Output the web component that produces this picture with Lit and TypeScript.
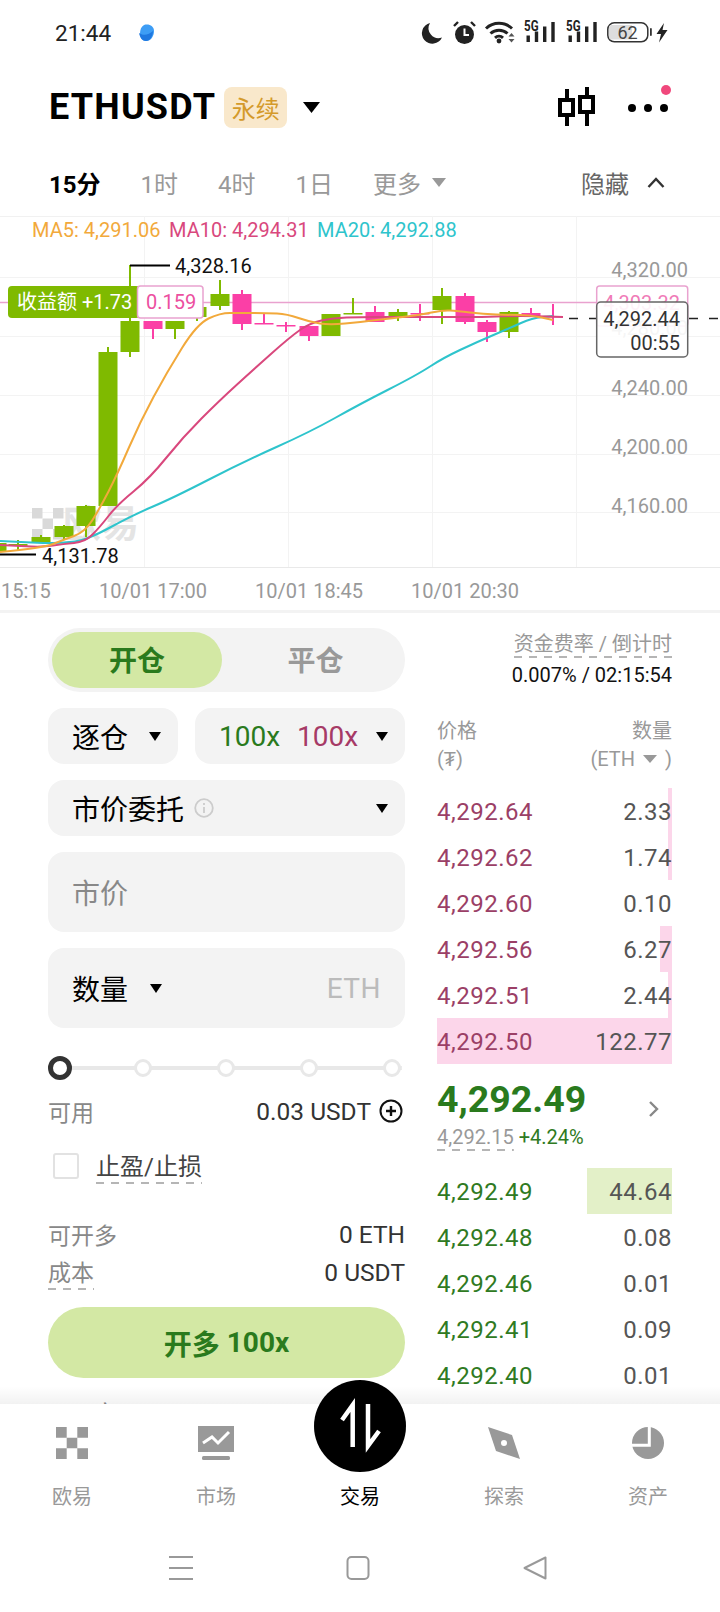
import { LitElement, html, css, svg } from "lit";
import { customElement } from "lit/decorators.js";

const GREEN = "#7fba00";
const PINK = "#fb3fa6";

// candles in page pixels: x, body top, body bottom, wick top, wick bottom, up?
const candles: [number, number, number, number, number, boolean][] = [
  [-3, 543, 552, 543, 552, true],
  [18, 544, 546, 540, 550, true],
  [41, 537, 543, 535, 543, true],
  [64, 526, 537, 525, 540, true],
  [86, 506, 526, 505, 537, true],
  [108, 352, 506, 347, 506, true],
  [130, 321, 352, 265, 357, true],
  [153, 321, 329, 321, 339, false],
  [175, 321, 329, 321, 339, true],
  [197, 307, 317, 307, 321, true],
  [220, 294, 306, 280, 310, true],
  [242, 294, 324, 290, 330, false],
  [264, 323, 324, 313, 324, false],
  [286, 325, 326, 322, 332, false],
  [309, 326, 336, 326, 341, false],
  [331, 314, 336, 314, 336, true],
  [353, 313, 314, 298, 314, true],
  [375, 312, 322, 306, 322, false],
  [398, 312, 317, 309, 321, true],
  [420, 313, 314, 304, 321, false],
  [442, 296, 310, 288, 324, true],
  [465, 296, 322, 293, 324, false],
  [487, 322, 332, 320, 342, false],
  [509, 312, 332, 311, 338, true],
  [531, 313, 317, 308, 317, false],
  [553, 316, 317, 304, 325, false],
];

const ma5 = "0,552 43,548 63,540 85,532 100,508 117,475 140,422 167,372 197,324 220,313 240,313 267,313 287,314 310,322 330,325 360,322 393,318 420,315 443,310 457,311 483,314 510,315 530,315 553,320";
const ma10 = "0,545 20,546 43,547 63,544 85,542 100,527 117,505 150,478 183,437 220,400 253,370 290,337 310,323 333,318 360,317 393,317 443,317 483,317 510,316 533,316 563,317";
const ma20 = "0,541 20,542 43,543 63,543 87,540 133,515 173,498 243,462 310,432 360,404 417,375 443,358 477,342 510,328 532,318 553,316";

// rounds the corners of a polyline, the chart lines are curves
const smooth = (pts: string) => {
  const p = pts.split(" ").map((s) => s.split(",").map(Number));
  let d = `M${p[0]}`;
  for (let i = 1; i < p.length - 1; i++) {
    d += `Q${p[i]} ${(p[i][0] + p[i + 1][0]) / 2},${(p[i][1] + p[i + 1][1]) / 2}`;
  }
  return d + `L${p[p.length - 1]}`;
};

const yLabels: [string, number][] = [
  ["4,320.00", 277],
  ["4,240.00", 395],
  ["4,200.00", 454],
  ["4,160.00", 513],
];

const xLabels: [string, number][] = [
  ["15:15", 1],
  ["10/01 17:00", 99],
  ["10/01 18:45", 255],
  ["10/01 20:30", 411],
];

const asks: [string, string, number][] = [
  ["4,292.64", "2.33", 4],
  ["4,292.62", "1.74", 4],
  ["4,292.60", "0.10", 0],
  ["4,292.56", "6.27", 12],
  ["4,292.51", "2.44", 4],
  ["4,292.50", "122.77", 235],
];

const bids: [string, string, number][] = [
  ["4,292.49", "44.64", 85],
  ["4,292.48", "0.08", 0],
  ["4,292.46", "0.01", 0],
  ["4,292.41", "0.09", 0],
  ["4,292.40", "0.01", 0],
];

const caret = html`<svg class="caret" viewBox="0 0 12 9"><path d="M0 0h12L6 9z" fill="#000" /></svg>`;

const signal = (dx: number) => svg`
  <text x=${114 + dx} y="21" font-family="Roboto" font-weight="700" font-size="14.5" textLength="14.5" lengthAdjust="spacingAndGlyphs" fill="#222">5G</text>
  <path d=${`M${116.5 + dx} 32v-6.5h3.4v6.5zM${124.8 + dx} 32v-10.5h3.4v10.5zM${133 + dx} 32v-15.5h3.4v15.5zM${141.3 + dx} 32v-20h3.4v20z`} fill="#222" />`;

@customElement("app-root")
export class AppRoot extends LitElement {
  static styles = css`
    :host {
      display: block;
      width: 720px;
      height: 1612px;
      background: #fff;
      color: #000;
      font-family: Roboto, "Noto Sans CJK SC", sans-serif;
    }
    .page {
      display: flex;
      flex-direction: column;
      height: 1612px;
      overflow: hidden;
    }
    svg {
      display: block;
      flex: none;
    }

    .status {
      height: 64px;
      flex: none;
      display: flex;
      align-items: center;
      justify-content: space-between;
      padding: 0 48px 0 55px;
      box-sizing: border-box;
    }
    .status-left {
      display: flex;
      align-items: center;
      gap: 26px;
      font-size: 22.5px;
      color: #222;
      padding-top: 2px;
    }
    .status-icons {
      margin-top: 6px;
    }

    .header {
      height: 86px;
      flex: none;
      display: flex;
      align-items: center;
      padding: 0 48px 0 49px;
      box-sizing: border-box;
    }
    .symbol {
      font-size: 36px;
      font-weight: 700;
      letter-spacing: 1.2px;
    }
    .badge {
      margin-left: 8px;
      width: 63px;
      height: 41px;
      border-radius: 8px;
      background: #f9e8cb;
      color: #d49a2a;
      font-size: 24px;
      display: flex;
      align-items: center;
      justify-content: center;
    }
    .header .caret {
      width: 17px;
      height: 11px;
      margin-left: 16px;
    }
    .header-right {
      margin-left: auto;
      display: flex;
      align-items: center;
      gap: 32px;
    }

    .tabs {
      height: 66px;
      flex: none;
      display: flex;
      align-items: center;
      gap: 40px;
      padding: 0 55px 2px 49px;
      box-sizing: border-box;
      font-size: 24px;
      color: #999;
    }
    .tabs .on {
      color: #000;
      font-weight: 700;
    }
    .more {
      display: flex;
      align-items: center;
      gap: 11px;
    }
    .more svg {
      width: 14px;
      height: 9px;
    }
    .hide {
      margin-left: auto;
      display: flex;
      align-items: center;
      gap: 18px;
      color: #666;
    }

    .chart {
      flex: none;
      width: 720px;
      height: 396px;
    }
    .chart text {
      font-family: Roboto, sans-serif;
      font-size: 20px;
    }
    .chart .cjk {
      font-family: Roboto, "Noto Sans CJK SC", sans-serif;
    }
    .chart .mark {
      font-size: 38px;
      font-weight: 700;
    }

    .main {
      flex: 1;
      min-height: 0;
      overflow: hidden;
      border-top: 3px solid #f3f3f3;
      margin-top: -2px;
      display: grid;
      grid-template-columns: 357px 235px;
      column-gap: 32px;
      padding-left: 48px;
    }

    .form {
      display: flex;
      flex-direction: column;
      padding-top: 15px;
    }
    .toggle {
      height: 64px;
      flex: none;
      border-radius: 32px;
      background: #f3f3f3;
      padding: 4px;
      box-sizing: border-box;
      display: grid;
      grid-template-columns: 170px 1fr;
      grid-template-rows: 56px;
      font-size: 28px;
      font-weight: 700;
      color: #999;
      text-align: center;
      line-height: 60px;
    }
    .toggle .on {
      background: #d3e8a4;
      border-radius: 28px;
      color: #2a7a1d;
    }
    .toggle .off {
      padding-left: 8px;
    }
    .pair {
      display: grid;
      grid-template-columns: 130px 1fr;
      gap: 17px;
      margin-top: 16px;
    }
    .box {
      background: #f3f3f3;
      border-radius: 16px;
      height: 56px;
      flex: none;
      display: flex;
      align-items: center;
      padding: 0 17px 0 24px;
      font-size: 28px;
    }
    .box .caret {
      width: 12px;
      height: 9px;
      margin-left: auto;
    }
    .stack {
      margin-top: 16px;
    }
    .tall {
      height: 80px;
    }
    .lev-long {
      color: #2a7a1d;
    }
    .lev-short {
      color: #a63a66;
      margin-left: 17px;
    }
    .box .info {
      margin-left: 10px;
    }
    .hint {
      color: #888;
    }
    .unit {
      margin-left: auto;
      margin-right: 7px;
      color: #bbb;
      letter-spacing: 0.5px;
    }
    .box .qty-caret {
      margin-left: 22px;
    }

    .slider {
      height: 24px;
      flex: none;
      margin-top: 28px;
      display: flex;
      align-items: center;
      justify-content: space-between;
      padding: 0 4px 0 3px;
      background: linear-gradient(#e8e8e8, #e8e8e8) center / 98% 4px no-repeat;
    }
    .knob {
      width: 18px;
      height: 18px;
      border-radius: 50%;
      border: 3px solid #e8e8e8;
      background: #fff;
      box-sizing: border-box;
    }
    .knob.on {
      width: 24px;
      height: 24px;
      margin: 0 -3px;
      border: 5px solid #333;
    }

    .line {
      height: 30px;
      flex: none;
      display: flex;
      align-items: center;
      justify-content: space-between;
      font-size: 23px;
      color: #888;
    }
    .line .val {
      color: #333;
      font-size: 24.5px;
    }
    .avail {
      margin-top: 16px;
    }
    .avail .val {
      display: flex;
      align-items: center;
      gap: 8px;
      margin-right: 2px;
    }
    .tpsl {
      display: flex;
      align-items: center;
      gap: 17px;
      margin: 21px 0 0 5px;
      font-size: 24px;
      color: #444;
    }
    .check {
      width: 26px;
      height: 26px;
      border: 2px solid #e2e2e2;
      border-radius: 3px;
      box-sizing: border-box;
    }
    .dashed {
      padding-bottom: 2px;
      background: repeating-linear-gradient(90deg, #b5b5b5 0 8px, transparent 8px 15px) bottom / 100% 2px no-repeat;
    }
    .can-open {
      margin-top: 35px;
    }
    .cost {
      margin-top: 8px;
    }
    .submit {
      margin-top: 20px;
      height: 71px;
      flex: none;
      border-radius: 36px;
      background: #d3e8a4;
      color: #2a7a1d;
      font-size: 28px;
      font-weight: 700;
      display: flex;
      align-items: center;
      justify-content: center;
      gap: 7px;
    }
    .after {
      margin-top: 19px;
    }

    .book {
      display: flex;
      flex-direction: column;
    }
    .funding {
      padding-top: 19px;
      display: flex;
      flex-direction: column;
      align-items: flex-end;
      font-size: 20px;
      color: #999;
      line-height: 24px;
    }
    .funding b {
      font-weight: 400;
      color: #111;
      margin-top: 5px;
    }
    .book-head {
      margin-top: 30px;
      display: flex;
      justify-content: space-between;
      font-size: 20px;
      line-height: 28px;
      color: #999;
    }
    .book-head .r {
      text-align: right;
    }
    .unit-line {
      display: flex;
      align-items: center;
      gap: 8px;
    }
    .unit-line svg {
      width: 14px;
      height: 8px;
    }
    .rows {
      margin-top: 15px;
    }
    .row {
      height: 46px;
      box-sizing: border-box;
      padding-top: 2px;
      display: flex;
      align-items: center;
      justify-content: space-between;
      font-size: 24px;
      letter-spacing: 0.5px;
      color: #555;
      background-repeat: no-repeat;
      background-position: right;
    }
    .ask {
      background-image: linear-gradient(#fcd6ea, #fcd6ea);
    }
    .bid {
      background-image: linear-gradient(#e3f0c8, #e3f0c8);
    }
    .ask span:first-child {
      color: #9b3f66;
    }
    .bid span:first-child {
      color: #2f7a22;
    }
    .mid {
      display: flex;
      justify-content: space-between;
      height: 104px;
      padding: 13px 12px 0 0;
      box-sizing: border-box;
    }
    .mid svg {
      margin-top: 23px;
    }
    .mid-price {
      font-size: 37.5px;
      font-weight: 700;
      color: #2a7a1d;
      line-height: 44px;
    }
    .mid-sub {
      display: flex;
      gap: 5px;
      font-size: 20px;
      line-height: 24px;
      margin-top: 4px;
      color: #999;
    }
    .mid-sub b {
      font-weight: 400;
      color: #2f7a22;
    }

    .nav {
      position: relative;
      flex: none;
      height: 208px;
      background: #fff;
      display: flex;
      flex-direction: column;
    }
    .nav::before {
      content: "";
      position: absolute;
      left: 0;
      right: 0;
      top: -18px;
      height: 18px;
      background: linear-gradient(rgba(0, 0, 0, 0), rgba(0, 0, 0, 0.05));
    }
    .fab {
      position: absolute;
      left: 314px;
      top: -24px;
      width: 92px;
      height: 92px;
      border-radius: 50%;
      background: #000;
    }
    .items {
      display: grid;
      grid-template-columns: repeat(5, 144px);
      padding-top: 19px;
    }
    .item {
      display: flex;
      flex-direction: column;
      align-items: center;
      gap: 20px;
      font-size: 20px;
      line-height: 28px;
      color: #999;
    }
    .item.on {
      color: #000;
    }
    .icon {
      width: 40px;
      height: 40px;
    }
    .soft {
      margin-top: 45px;
      display: flex;
      justify-content: center;
      gap: 153px;
      padding-right: 4px;
    }
  `;

  private statusIcons() {
    return html`<svg class="status-icons" width="262" height="50" viewBox="0 0 262 50">
      <path d="M20 13a10.5 10.5 0 1 0 12 14.5a10 10 0 0 1-12-14.5z" fill="#222" />
      <circle cx="54.5" cy="24.5" r="9.5" fill="#222" />
      <path d="M54.5 18.5v6.5h4.5" fill="none" stroke="#fff" stroke-width="2" />
      <path d="M44 16l4-4M65 16l-4-4" stroke="#222" stroke-width="2.4" />
      <g fill="none" stroke="#222" stroke-width="3">
        <path d="M76 18.5a19 19 0 0 1 26 0" />
        <path d="M80.5 23.5a12.5 12.5 0 0 1 17 0" />
        <path d="M85 27.8a6 6 0 0 1 8 0" />
      </g>
      <circle cx="89" cy="31" r="2.4" fill="#222" />
      <path d="M98.5 26.5l3-3.5l3 3.5zM98.5 29l3 3.5l3-3.5z" fill="#555" />
      ${signal(0)}${signal(42)}
      <rect x="197.8" y="12.8" width="40" height="19" rx="6.5" fill="#fff" stroke="#333" stroke-width="1.5" />
      <path d="M201 15h21v14.6h-21a2.4 2.4 0 0 1-2-2.4v-9.8a2.4 2.4 0 0 1 2-2.4z" fill="#ddd" />
      <text x="217.5" y="28.5" text-anchor="middle" font-family="Roboto" font-size="18" fill="#444">62</text>
      <rect x="240" y="18" width="1.8" height="8" rx="0.9" fill="#333" />
      <path d="M254 13l-7.5 11h4.5l-2 8.5l8.5-12.5h-5z" fill="#222" />
    </svg>`;
  }

  private chart() {
    return html`<svg class="chart" viewBox="0 216 720 396">
      <path d="M0 216.5H720" stroke="#f1f1f1" />
      ${[277, 336, 395, 454, 512].map((y) => svg`<path d=${`M0 ${y}.5H720`} stroke="#f3f3f3" />`)}
      ${[144, 288, 432, 576].map((x) => svg`<path d=${`M${x}.5 216V567`} stroke="#f3f3f3" />`)}
      <path d="M0 567.5H720" stroke="#e9e9e9" />

      <g transform="translate(32 508)" fill="#d9d9d9">
        ${[[0, 0], [21, 0], [10.5, 10.5], [0, 21], [21, 21]].map(([x, y]) => svg`<rect x=${x} y=${y} width="10.5" height="10.5" />`)}
      </g>
      <text class="cjk mark" x="63" y="537" fill="#e4e4e4">欧易</text>

      ${yLabels.map(([t, y]) => svg`<text x="688" y=${y} text-anchor="end" fill="#999">${t}</text>`)}
      ${xLabels.map(([t, x]) => svg`<text x=${x} y="598" fill="#999">${t}</text>`)}

      <path d="M0 302.5H600" stroke="#e9a2cf" stroke-width="1.5" />
      ${candles.map(([x, t, b, wt, wb, up]) => {
        const c = up ? GREEN : PINK;
        return svg`<path d=${`M${x} ${wt}V${wb}`} stroke=${c} stroke-width="2" />
          <rect x=${x - 9.5} y=${t} width="19" height=${Math.max(b - t, 1.5)} fill=${c} />`;
      })}

      <path d=${smooth(ma20)} fill="none" stroke="#2ec4cc" stroke-width="2" />
      <path d=${smooth(ma10)} fill="none" stroke="#d9487d" stroke-width="2" />
      <path d=${smooth(ma5)} fill="none" stroke="#f2a93b" stroke-width="2" />

      <path d="M130 265.5H170" stroke="#000" stroke-width="2" />
      <text x="175" y="273" fill="#111">4,328.16</text>
      <path d="M0 554.5H36" stroke="#000" stroke-width="2" />
      <text x="42" y="563" fill="#111">4,131.78</text>

      <text x="32" y="237" fill="#f2a93b">MA5: 4,291.06</text>
      <text x="169" y="237" fill="#d9487d">MA10: 4,294.31</text>
      <text x="317" y="237" fill="#2ec4cc">MA20: 4,292.88</text>

      <rect x="8" y="286" width="132" height="32" rx="4" fill=${GREEN} />
      <text class="cjk" x="17" y="309" fill="#fff">收益额 +1.73</text>
      <rect x="137.5" y="286" width="65.5" height="32" rx="3" fill="#fff" stroke="#e9a2cf" stroke-width="1.5" />
      <text x="146" y="309" fill="#ec4f9f">0.159</text>

      <path d="M569 318.5H720" stroke="#222" stroke-width="1.5" stroke-dasharray="9 11" />
      <rect x="596.7" y="286" width="91" height="40" rx="3" fill="#fff" stroke="#e9a2cf" stroke-width="1.5" />
      <text x="680" y="310" text-anchor="end" fill="#ec4f9f" opacity="0.75">4,303.32</text>
      <text x="688" y="335" text-anchor="end" fill="#999">4,280.00</text>
      <rect x="596.7" y="302" width="91" height="55" rx="4" fill="#fff" fill-opacity="0.9" stroke="#666" stroke-width="1.5" />
      <text x="680" y="326" text-anchor="end" fill="#333">4,292.44</text>
      <text x="680" y="350" text-anchor="end" fill="#333">00:55</text>
    </svg>`;
  }

  private row(kind: string, [price, qty, depth]: [string, string, number]) {
    return html`<div class="row ${kind}" style="background-size:${depth}px 100%">
      <span>${price}</span><span>${qty}</span>
    </div>`;
  }

  render() {
    return html`<div class="page">
      <div class="status">
        <div class="status-left">
          <span>21:44</span>
          <svg width="18" height="18" viewBox="0 0 18 18">
            <path d="M7 1c5-1.5 10 1 10 6c0 5-3 10-8 10c-2 0-4-1-5-3c-2-4-1-11 3-13z" fill="#3d9df5" />
            <path d="M2 9c4 3 10 2 14-2c0 5-3 10-7 10c-3.5 0-6-3-7-8z" fill="#1f78e0" />
          </svg>
        </div>
        ${this.statusIcons()}
      </div>

      <div class="header">
        <span class="symbol">ETHUSDT</span>
        <span class="badge">永续</span>
        <svg class="caret" viewBox="0 0 17 11"><path d="M0 0h17L8.5 11z" fill="#000" /></svg>
        <div class="header-right">
          <svg width="39" height="40" viewBox="0 0 39 40" fill="none" stroke="#000" stroke-width="4">
            <path d="M10 2v11M10 28v11M30 0v10M30 25v14" />
            <rect x="3" y="13" width="13" height="15" />
            <rect x="23" y="10" width="13" height="15" />
          </svg>
          <svg width="44" height="44" viewBox="0 0 44 44">
            <circle cx="4" cy="23" r="4" /><circle cx="20" cy="23" r="4" /><circle cx="36" cy="23" r="4" />
            <circle cx="38" cy="5" r="5" fill="#f0487c" />
          </svg>
        </div>
      </div>

      <div class="tabs">
        <span class="on">15分</span><span>1时</span><span>4时</span><span>1日</span>
        <span class="more">更多<svg viewBox="0 0 14 9"><path d="M0 0h14L7 9z" fill="#999" /></svg></span>
        <span class="hide">隐藏
          <svg width="18" height="11" viewBox="0 0 18 11"><path d="M1.5 10L9 2l7.5 8" fill="none" stroke="#333" stroke-width="2.4" /></svg>
        </span>
      </div>

      ${this.chart()}

      <div class="main">
        <div class="form">
          <div class="toggle"><span class="on">开仓</span><span class="off">平仓</span></div>
          <div class="pair">
            <div class="box">逐仓 ${caret}</div>
            <div class="box"><span class="lev-long">100x</span><span class="lev-short">100x</span>${caret}</div>
          </div>
          <div class="box stack">
            市价委托
            <svg class="info" width="20" height="20" viewBox="0 0 20 20" fill="none" stroke="#ccc" stroke-width="1.8">
              <circle cx="10" cy="10" r="8.8" /><path d="M10 9v6M10 5v2" />
            </svg>
            ${caret}
          </div>
          <div class="box stack tall hint">市价</div>
          <div class="box stack tall">
            数量 <svg class="caret qty-caret" viewBox="0 0 12 9"><path d="M0 0h12L6 9z" fill="#000" /></svg>
            <span class="unit">ETH</span>
          </div>
          <div class="slider">
            <span class="knob on"></span><span class="knob"></span><span class="knob"></span><span class="knob"></span><span class="knob"></span>
          </div>
          <div class="line avail">
            <span>可用</span>
            <span class="val">0.03 USDT
              <svg width="24" height="24" viewBox="0 0 24 24" fill="none" stroke="#111" stroke-width="2">
                <circle cx="12" cy="12" r="10.5" /><path d="M12 7v10M7 12h10" stroke-width="2.4" />
              </svg>
            </span>
          </div>
          <div class="tpsl"><span class="check"></span><span class="dashed">止盈/止损</span></div>
          <div class="line can-open"><span>可开多</span><span class="val">0 ETH</span></div>
          <div class="line cost"><span class="dashed">成本</span><span class="val">0 USDT</span></div>
          <div class="submit"><span>开多</span><span>100x</span></div>
          <div class="line after"><span>可开空</span><span class="val">0 ETH</span></div>
        </div>

        <div class="book">
          <div class="funding">
            <span class="dashed">资金费率 / 倒计时</span>
            <b>0.007% / 02:15:54</b>
          </div>
          <div class="book-head">
            <div>价格<br />(₮)</div>
            <div class="r">数量<br />
              <span class="unit-line">(ETH <svg viewBox="0 0 14 8"><path d="M0 0h14L7 8z" fill="#999" /></svg>)</span>
            </div>
          </div>
          <div class="rows">${asks.map((a) => this.row("ask", a))}</div>
          <div class="mid">
            <div>
              <div class="mid-price">4,292.49</div>
              <div class="mid-sub"><span class="dashed">4,292.15</span><b>+4.24%</b></div>
            </div>
            <svg width="12" height="18" viewBox="0 0 12 18"><path d="M2 2l7 7l-7 7" fill="none" stroke="#888" stroke-width="2.4" /></svg>
          </div>
          <div>${bids.map((b) => this.row("bid", b))}</div>
        </div>
      </div>

      <div class="nav">
        <svg class="fab" viewBox="314 1380 92 92" fill="none" stroke="#fff" stroke-width="4.5">
          <path d="M352.7 1447V1405L342 1420M368 1404V1446L379 1431" />
        </svg>
        <div class="items">
          <div class="item">
            <svg class="icon" viewBox="0 0 40 40" fill="#999">
              <path d="M4 4h10.7v10.7H4zM25.3 4H36v10.7H25.3zM14.7 14.7h10.6v10.6H14.7zM4 25.3h10.7V36H4zM25.3 25.3H36V36H25.3z" />
            </svg>
            <span>欧易</span>
          </div>
          <div class="item">
            <svg class="icon" viewBox="0 0 40 40" fill="#999">
              <path d="M2 3h36v26H2z" /><rect x="6" y="33" width="28" height="4" rx="1.5" />
              <path d="M7 20l9-6l6 6l11-11" fill="none" stroke="#fff" stroke-width="3" />
            </svg>
            <span>市场</span>
          </div>
          <div class="item on">
            <div class="icon"></div>
            <span>交易</span>
          </div>
          <div class="item">
            <svg class="icon" viewBox="0 0 40 40" fill="#999">
              <path fill-rule="evenodd" d="M4 4l24 8l8 24l-24-8zM20 17a3 3 0 1 0 0 6a3 3 0 0 0 0-6z" />
            </svg>
            <span>探索</span>
          </div>
          <div class="item">
            <svg class="icon" viewBox="0 0 40 40" fill="#999">
              <circle cx="20" cy="20" r="16" />
              <path d="M21.3 3v19.3H3" fill="none" stroke="#fff" stroke-width="3" />
            </svg>
            <span>资产</span>
          </div>
        </div>
        <div class="soft">
          <svg width="24" height="24" viewBox="0 0 24 24" stroke="#999" stroke-width="2">
            <path d="M0 1h24M0 12h24M0 23h24" />
          </svg>
          <svg width="24" height="24" viewBox="0 0 24 24" fill="none" stroke="#999" stroke-width="2">
            <rect x="1.5" y="1" width="21" height="22" rx="4" />
          </svg>
          <svg width="24" height="24" viewBox="0 0 24 24" fill="none" stroke="#999" stroke-width="2">
            <path d="M22.5 1.5v21L1.5 12z" stroke-linejoin="round" />
          </svg>
        </div>
      </div>
    </div>`;
  }
}
